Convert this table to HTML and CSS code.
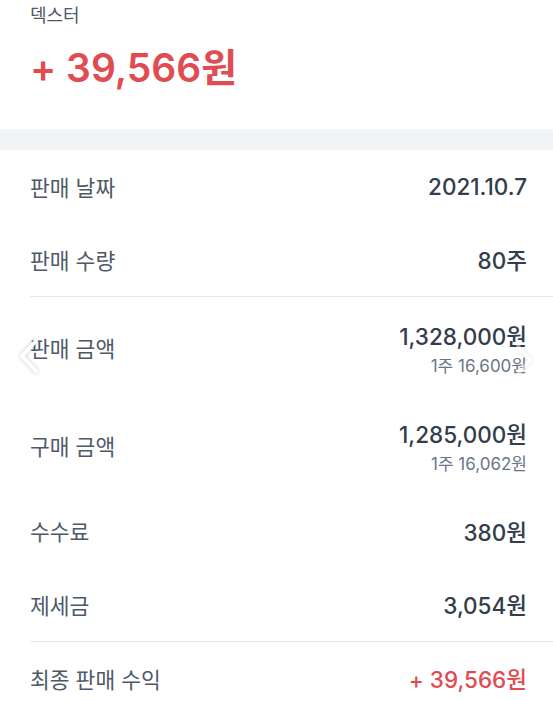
FILE: index.html
```html
<!DOCTYPE html>
<html lang="ko">
<head>
<meta charset="utf-8">
<link rel="stylesheet" href="styles.css">
</head>
<body>
<div class="page">
  <header class="head">
    <div class="name">덱스터</div>
    <div class="profit">+ 39,566원</div>
  </header>
  <div class="band"></div>
  <section class="list">
    <div class="row r-a"><span class="label">판매 날짜</span><span class="value">2021.10.7</span></div>
    <div class="row r-b"><span class="label">판매 수량</span><span class="value">80주</span></div>
    <div class="divider"></div>
    <div class="row r-c"><span class="label">판매 금액</span><span class="vals"><span class="value">1,328,000원</span><span class="sub">1주 16,600원</span></span></div>
    <div class="row r-d"><span class="label">구매 금액</span><span class="vals"><span class="value">1,285,000원</span><span class="sub">1주 16,062원</span></span></div>
    <div class="row r-e"><span class="label">수수료</span><span class="value">380원</span></div>
    <div class="row r-f"><span class="label">제세금</span><span class="value">3,054원</span></div>
    <div class="divider"></div>
    <div class="row r-g"><span class="label">최종 판매 수익</span><span class="value red">+ 39,566원</span></div>
  </section>
  <div class="chev chev-left"><svg width="26" height="40" viewBox="0 0 26 40"><path d="M20 5 L6 20 L20 35" fill="none" stroke="#fff" stroke-width="4" stroke-linecap="round" stroke-linejoin="round"/></svg></div>
  <div class="chev chev-right"><svg width="24" height="40" viewBox="0 0 24 40"><path d="M6 6 L18 20 L6 34" fill="none" stroke="#fff" stroke-width="3.5" stroke-linecap="round" stroke-linejoin="round"/></svg></div>
</div>
</body>
</html>
```
FILE: styles.css
```css
* { box-sizing: border-box; }
html, body { margin: 0; padding: 0; background: #fff; }
body {
  font-family: Inter, "Noto Sans CJK KR", sans-serif;
  overflow: hidden;
}
.page { position: relative; width: 553px; height: 701px; }
.head { height: 129px; padding: 4px 30px 0; }
.name { font-size: 18px; line-height: 24px; color: #4e5968; }
.profit { margin-top: 16px; font-size: 39px; line-height: 48px; font-weight: 600; color: #df4d53; }
.band { height: 21px; background: #f2f3f6; }
.list { padding-left: 30px; }
.row { display: flex; justify-content: space-between; align-items: center; padding-right: 26px; }
.r-a { height: 72px; }
.r-b { height: 74px; }
.r-c { height: 99px; }
.r-d { height: 97px; }
.r-e { height: 73px; }
.r-f { height: 74px; }
.r-g { height: 70px; }
.divider { height: 1px; background: #e5e8eb; margin-bottom: 1px; }
.label { font-size: 21.5px; color: #4e5968; }
.vals { display: flex; flex-direction: column; align-items: flex-end; }
.value { font-size: 22.5px; color: #333d4b; font-weight: 500; }
.sub { font-size: 17px; color: #6b7684; margin-top: 1px; }
.red { color: #df4d53; }
.chev { position: absolute; filter: drop-shadow(0 0 2px rgba(0,0,0,0.22)); }
.chev-left { left: 16px; top: 336px; }
.chev-right { left: 512px; top: 340px; opacity: 0.5; }
```
